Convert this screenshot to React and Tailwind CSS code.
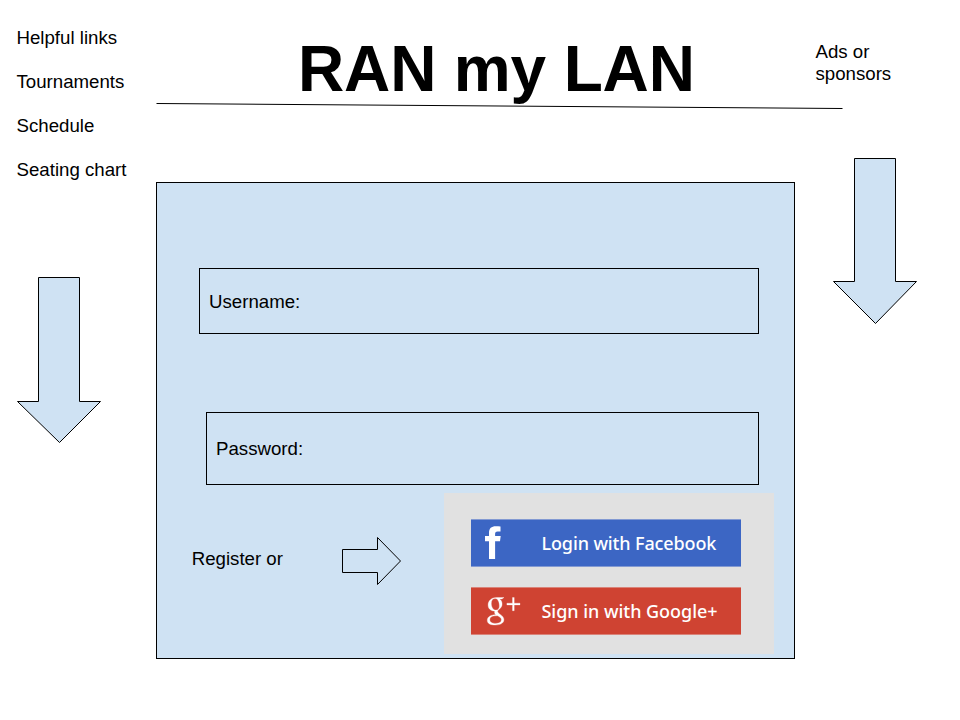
const links = ["Helpful links", "Tournaments", "Schedule", "Seating chart"];

function DownArrow({ points, height }) {
  return (
    <svg width="84" height={height} className="block shrink-0 overflow-visible">
      <polygon points={points} fill="#cfe2f3" stroke="#000" strokeWidth="1" />
    </svg>
  );
}

function FacebookIcon() {
  return (
    <svg width="50" height="48" className="block shrink-0" fill="#fff">
      <path d="M18 40V22.300H14V17h4v-3.200C18 9.300 20.400 7.200 24.800 7.200c1.600 0 3.300 0 4.700.2v5.100h-2.900c-2 0-2.500 1-2.500 2.500v2h5.600l-.7 5.300h-4.900V40z" />
    </svg>
  );
}

function GoogleIcon() {
  return (
    <svg width="50" height="48" className="block shrink-0" fill="#fff" stroke="#fff" strokeWidth="0.3">
      <path
        fillRule="evenodd"
        d="M25.500 10.500H33l-2 1.500h-2.400c1.600 1.200 2.500 2.800 2.500 5 0 2.400-1.200 4-2.900 5.300-1.300 1-1.600 1.500-1.600 2.200 0 .8.700 1.400 2 2.400 2.900 2 4.300 3.300 4.300 5.900 0 3.300-3.400 5.200-8.700 5.200-4.800 0-7.900-1.400-7.900-4.600 0-3.800 3.700-5.600 8.400-5.700-.8-.8-1.200-1.600-1.200-2.600l.2-1c-4 .1-6.600-2.500-6.600-6 0-4.300 3.400-7.600 8.400-7.600zM24.200 11.600c-2.500 0-3.900 1.700-3.900 4.600 0 3.800 1.700 6.900 4.500 6.900 2.300 0 3.600-1.600 3.600-4.200 0-4-1.600-7.300-4.200-7.300zM25.100 28.800c-3.900 0-6.300 1.500-6.300 3.900 0 2.500 2.400 3.700 6.100 3.700 3.500 0 5.500-1.300 5.500-3.600 0-1.700-1.200-2.500-3.700-4z"
      />
      <path d="M41.500 10.500h1.700v5.700H49v1.700h-5.800v5.800h-1.700v-5.800h-5.600v-1.700h5.600z" />
    </svg>
  );
}

export default function App() {
  return (
    <div className="flex h-[720px] w-[960px] overflow-hidden bg-white font-['Liberation_Sans',Arial,sans-serif] text-[18.67px] leading-[22px] text-black">
      <aside className="flex w-[156px] shrink-0 flex-col pl-4 pt-[27px]">
        <nav className="flex h-[250px] flex-col gap-[22px] pl-[0.5px]">
          {links.map((link) => (
            <a key={link} className="whitespace-nowrap">{link}</a>
          ))}
        </nav>
        <DownArrow
          height="167"
          points="22.500,0.500 63.500,0.500 63.500,124.500 84.500,124.500 43.500,165.500 1.500,124.500 22.500,124.500"
        />
      </aside>

      <main className="flex w-[639px] shrink-0 flex-col">
        <header className="flex h-[182px] flex-col pt-8">
          <h1 className="h-[70px] whitespace-nowrap pl-[142px] text-[64px] font-bold leading-[74px] tracking-[-0.15px]">
            RAN my LAN
          </h1>
          <svg width="687" height="8" className="block shrink-0 overflow-visible">
            <line x1="0.500" y1="1.500" x2="686.500" y2="6.500" stroke="#000" strokeWidth="1" />
          </svg>
        </header>

        <section className="flex h-[477px] flex-col border border-black bg-[#cfe2f3] pt-[85px]">
          <div className="ml-[42px] flex h-[66px] w-[560px] shrink-0 items-center border border-black pl-[9px] pt-px">
            Username:
          </div>
          <div className="ml-[49px] mt-[78px] flex h-[73px] w-[553px] shrink-0 items-center border border-black pl-[9px] pt-px">
            Password:
          </div>
          <div className="mt-2 flex">
            <p className="w-[185px] shrink-0 pl-[34.7px] pt-[55px]">Register or</p>
            <svg width="102" height="100" className="block shrink-0">
              <polygon
                points="0.500,56.500 35.500,56.500 35.500,44.500 58.500,68 35.500,91.500 35.500,79.500 0.500,79.500"
                fill="none"
                stroke="#000"
              />
            </svg>
            <div className="flex h-[161px] w-[330px] shrink-0 flex-col gap-5 bg-[#e1e1e1] pl-[27px] pt-[26px] font-['Noto_Sans',sans-serif] text-[18px] font-medium text-white">
              <button className="flex h-12 w-[270px] items-center border-y border-[#8299d2] bg-[#3c66c4]">
                <FacebookIcon />
                <span className="whitespace-nowrap pl-[20.5px] tracking-[-0.12px]">Login with Facebook</span>
              </button>
              <button className="flex h-12 w-[270px] items-center border-y border-[#d98379] bg-[#cf4332]">
                <GoogleIcon />
                <span className="whitespace-nowrap pl-[20.5px] tracking-[-0.03px]">Sign in with Google+</span>
              </button>
            </div>
          </div>
        </section>
      </main>

      <aside className="flex flex-1 flex-col pt-[41px]">
        <p className="h-[117px] w-[110px] shrink-0 pl-[20.5px]">
          Ads or
          <br />
          sponsors
        </p>
        <div className="pl-[38px]">
          <DownArrow
            height="167"
            points="21.500,0.500 62.500,0.500 62.500,123.500 83.500,123.500 42.500,165.500 0.500,123.500 21.500,123.500"
          />
        </div>
      </aside>
    </div>
  );
}
